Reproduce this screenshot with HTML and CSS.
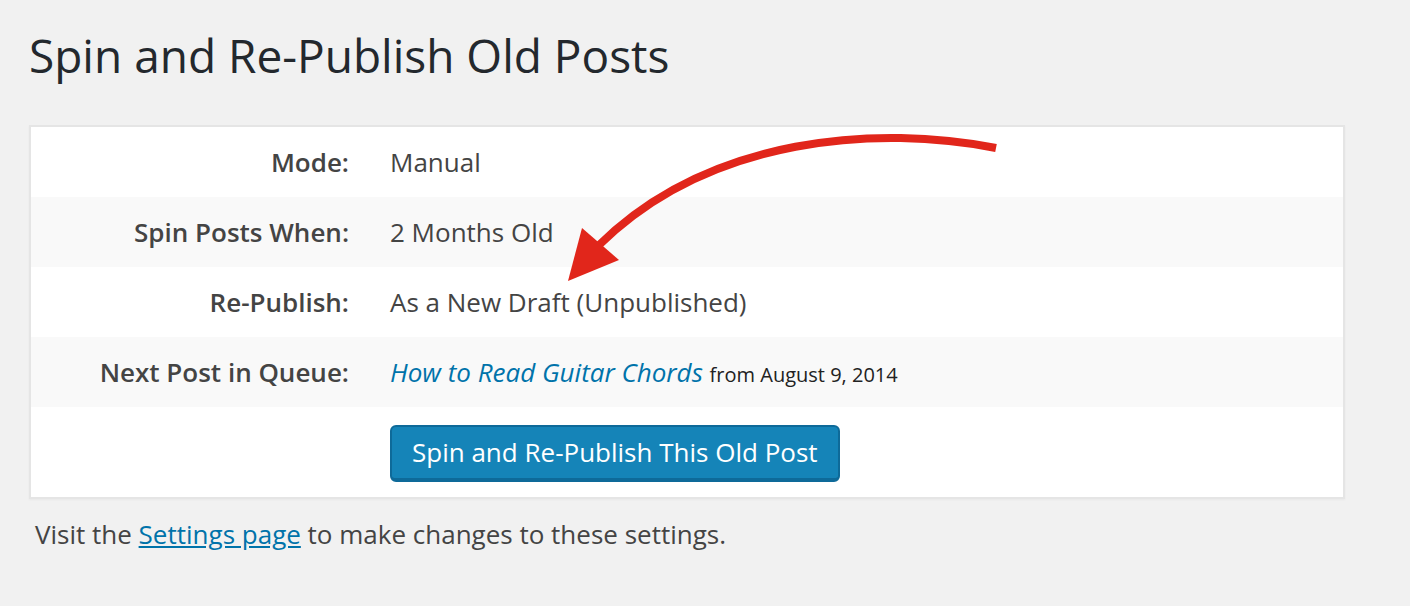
FILE: index.html
```html
<!DOCTYPE html>
<html>
<head>
<meta charset="utf-8">
<link rel="stylesheet" href="styles.css">
</head>
<body>
<div class="wrap">
  <h1 class="title">Spin and Re-Publish Old Posts</h1>
  <div class="box">
    <div class="row">
      <div class="label">Mode:</div>
      <div class="value">Manual</div>
    </div>
    <div class="row alt">
      <div class="label">Spin Posts When:</div>
      <div class="value">2 Months Old</div>
    </div>
    <div class="row">
      <div class="label">Re-Publish:</div>
      <div class="value">As a New Draft (Unpublished)</div>
    </div>
    <div class="row alt">
      <div class="label">Next Post in Queue:</div>
      <div class="value"><a class="post-link" href="#">How to Read Guitar Chords</a> <span class="small">from August 9, 2014</span></div>
    </div>
    <div class="row action">
      <div class="label"></div>
      <div class="value"><button class="btn">Spin and Re-Publish This Old Post</button></div>
    </div>
  </div>
  <p class="note">Visit the <a href="#" class="settings">Settings page</a> to make changes to these settings.</p>
</div>
<svg class="arrow" width="1410" height="606" viewBox="0 0 1410 606">
  <path d="M 996 148 C 880 125, 710 135, 598 246" fill="none" stroke="#e1261b" stroke-width="8"/>
  <polygon points="568,281 582,228 619,260" fill="#e1261b"/>
</svg>
</body>
</html>
```

FILE: styles.css
```css
html, body {
  margin: 0;
  padding: 0;
  background: #f1f1f1;
  font-family: "Open Sans", "Liberation Sans", sans-serif;
  color: #444;
}
.wrap {
  padding: 22px 0 0 29px;
  width: 1316px;
}
.title {
  margin: 0 0 37px 0;
  font-size: 46px;
  font-weight: 400;
  line-height: 66px;
  color: #23282d;
}
.box {
  background: #fff;
  border: 2px solid #e5e5e5;
  box-shadow: 0 1px 2px rgba(0,0,0,0.04);
}
.row {
  display: flex;
  align-items: center;
  height: 70px;
}
.row.alt {
  background: #f9f9f9;
}
.row.action {
  height: 90px;
}
.label {
  width: 318px;
  text-align: right;
  font-weight: 600;
  font-size: 26px;
  color: #444;
  padding-right: 41px;
}
.value {
  font-size: 26px;
  color: #444;
}
.post-link {
  color: #0073aa;
  font-style: italic;
  text-decoration: none;
}
.small {
  font-size: 20px;
  color: #222;
}
.btn {
  font-family: "Open Sans", "Liberation Sans", sans-serif;
  font-size: 26px;
  color: #fff;
  background: #1584b8;
  border: 2px solid #0e6a99;
  border-bottom-width: 4px;
  border-radius: 6px;
  height: 57px;
  padding: 0 20px;
  margin-top: 2px;
}
.note {
  margin: 17px 0 0 6px;
  font-size: 26px;
  color: #444;
}
.settings {
  color: #0073aa;
}
.arrow {
  position: absolute;
  left: 0;
  top: 0;
  pointer-events: none;
}
```
